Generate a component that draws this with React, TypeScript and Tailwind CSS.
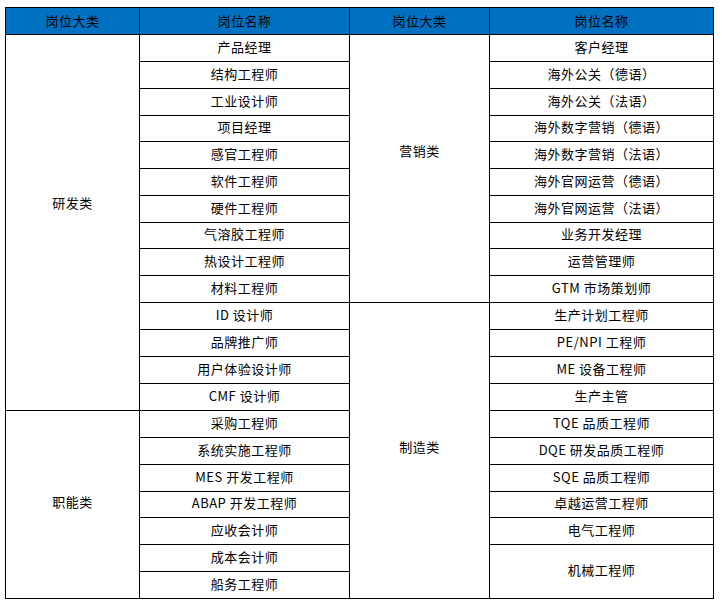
const font = { fontFamily: '"Noto Sans CJK SC", "Noto Sans", sans-serif' };

// per-row heights (px) so lines land where the sheet's do
const H = [27, 27, 27, 26, 27, 27, 27, 26, 27, 27, 27, 27, 27, 27, 27, 27, 27, 26, 27, 27, 26];

const rd = [
  '产品经理', '结构工程师', '工业设计师', '项目经理', '感官工程师', '软件工程师', '硬件工程师',
  '气溶胶工程师', '热设计工程师', '材料工程师', 'ID 设计师', '品牌推广师', '用户体验设计师', 'CMF 设计师',
  '采购工程师', '系统实施工程师', 'MES 开发工程师', 'ABAP 开发工程师', '应收会计师', '成本会计师', '船务工程师',
];

const right = [
  '客户经理', '海外公关（德语）', '海外公关（法语）', '海外数字营销（德语）', '海外数字营销（法语）',
  '海外官网运营（德语）', '海外官网运营（法语）', '业务开发经理', '运营管理师', 'GTM 市场策划师',
  '生产计划工程师', 'PE/NPI 工程师', 'ME 设备工程师', '生产主管', 'TQE 品质工程师', 'DQE 研发品质工程师',
  'SQE 品质工程师', '卓越运营工程师', '电气工程师',
];

function Cell({ text, h, last }: { text: string; h: number; last?: boolean }) {
  return (
    <div
      className={`flex items-center justify-center border-b border-black pb-[4px] ${h === 27 ? 'h-[27px]' : h === 26 ? 'h-[26px]' : 'h-[53px]'} ${last ? 'border-b-0' : ''}`}
    >
      {text}
    </div>
  );
}

function Head({ text }: { text: string }) {
  return (
    <div className="flex h-[27px] items-center justify-center border-b border-black bg-[#0070c0] pb-[1px] text-black">
      {text}
    </div>
  );
}

export default function App() {
  return (
    <div className="h-[601px] w-[722px] bg-white pl-[5px] pt-[7px]" style={font}>
      <div className="flex w-[709px] border border-black text-[13px] leading-none tracking-[0.5px] text-black">
        {/* 岗位大类 (left) */}
        <div className="flex w-[134px] flex-col border-r border-black">
          <Head text="岗位大类" />
          <div className="flex h-[376px] items-center justify-center border-b border-black pb-[40px]">研发类</div>
          <div className="flex h-[187px] items-center justify-center pb-[7px]">职能类</div>
        </div>

        {/* 岗位名称 (left) */}
        <div className="flex w-[210px] flex-col border-r border-black">
          <Head text="岗位名称" />
          {rd.map((t, i) => (
            <Cell key={t} text={t} h={H[i]} last={i === rd.length - 1} />
          ))}
        </div>

        {/* 岗位大类 (right) */}
        <div className="flex w-[140px] flex-col border-r border-black">
          <Head text="岗位大类" />
          <div className="flex h-[268px] items-center justify-center border-b border-black pb-[36px]">营销类</div>
          <div className="flex h-[295px] items-center justify-center pb-[9px]">制造类</div>
        </div>

        {/* 岗位名称 (right) */}
        <div className="flex w-[223px] flex-col">
          <Head text="岗位名称" />
          {right.map((t, i) => (
            <Cell key={t} text={t} h={H[i]} />
          ))}
          <Cell text="机械工程师" h={53} last />
        </div>
      </div>
    </div>
  );
}
